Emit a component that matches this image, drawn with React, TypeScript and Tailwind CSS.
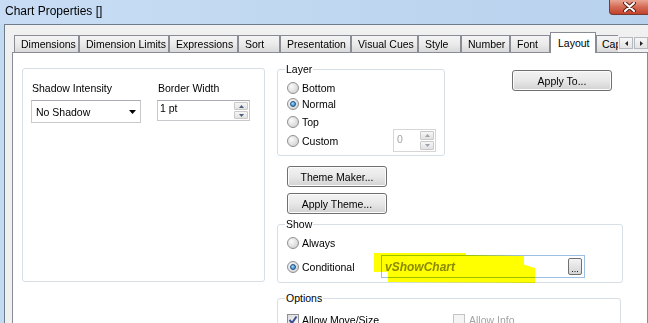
import React from 'react';

const tabs = [
  { label: 'Dimensions', w: 'w-[65px]' },
  { label: 'Dimension Limits', w: 'w-[90px]' },
  { label: 'Expressions', w: 'w-[69px]' },
  { label: 'Sort', w: 'w-[42px]' },
  { label: 'Presentation', w: 'w-[71px]' },
  { label: 'Visual Cues', w: 'w-[67px]' },
  { label: 'Style', w: 'w-[43px]' },
  { label: 'Number', w: 'w-[49px]' },
  { label: 'Font', w: 'w-[40px]' },
];

function Radio({ checked }: { checked?: boolean }) {
  return (
    <span className="w-[12px] h-[12px] rounded-full border border-[#8e8f8f] bg-radial-[at_35%_35%] from-[#fbfbfb] to-[#c9c9c9] flex items-center justify-center shrink-0">
      {checked && (
        <span className="w-[6px] h-[6px] rounded-full border border-[#1f4f86] bg-radial-[at_40%_35%] from-[#9fe0ff] to-[#1d6cb5]" />
      )}
    </span>
  );
}

function Check({ checked, disabled }: { checked?: boolean; disabled?: boolean }) {
  return (
    <span
      className={`w-[12px] h-[12px] border flex items-center justify-center shrink-0 ${
        disabled ? 'border-[#c4c4c4] bg-[#f4f4f4]' : 'border-[#8e8f8f] bg-linear-to-br from-[#dcdcdc] to-[#fbfbfb]'
      }`}
    >
      {checked && (
        <svg width="10" height="10" viewBox="0 0 10 10">
          <path d="M1.5 5 L4 8 L8.5 1.5" fill="none" stroke="#3b4f8f" strokeWidth="2" />
        </svg>
      )}
    </span>
  );
}

function WinButton({ children, className = '' }: { children: React.ReactNode; className?: string }) {
  return (
    <div
      className={`h-[21px] w-[100px] rounded-[3px] border border-[#707070] bg-linear-to-b from-[#f3f3f3] via-[#e8e8e8] to-[#d2d2d2] shadow-[inset_0_0_0_1px_#fbfbfb] flex items-center justify-center text-black ${className}`}
    >
      {children}
    </div>
  );
}

function SpinButtons({ faded }: { faded?: boolean }) {
  const arrow = faded ? '#9aa3ad' : '#4c607a';
  return (
    <div className="flex flex-col gap-[1px] w-[15px] h-full py-[1px] pr-[1px]">
      <div className="flex-1 border border-[#c9c9c9] rounded-[1px] bg-linear-to-b from-[#f6f6f6] to-[#e2e2e2] flex items-center justify-center">
        <svg width="5" height="3" viewBox="0 0 5 3">
          <path d="M0 3 L2.5 0 L5 3 Z" fill={arrow} />
        </svg>
      </div>
      <div className="flex-1 border border-[#c9c9c9] rounded-[1px] bg-linear-to-b from-[#f6f6f6] to-[#e2e2e2] flex items-center justify-center">
        <svg width="5" height="3" viewBox="0 0 5 3">
          <path d="M0 0 L2.5 3 L5 0 Z" fill={arrow} />
        </svg>
      </div>
    </div>
  );
}

function Group({ title, className = '', children }: { title: string; className?: string; children?: React.ReactNode }) {
  return (
    <div className={`relative border border-[#d5dfe5] rounded-[3px] ${className}`}>
      {title && <span className="absolute -top-[7px] left-[7px] bg-white px-[1px] leading-[12px]">{title}</span>}
      {children}
    </div>
  );
}

export default function App() {
  return (
    <div className="w-[648px] h-[323px] overflow-hidden flex flex-col bg-[#c3daf3] font-['Liberation_Sans',Arial,sans-serif] text-[10.5px] leading-[12px] text-black select-none">
      {/* title bar */}
      <div className="h-[24px] flex items-start justify-between bg-linear-to-r from-[#c8ddf5] to-[#b8d1ec] shrink-0">
        <span className="mt-[4px] ml-[5px] text-[12px] leading-[14px] text-black">Chart Properties []</span>
        <div className="w-[39px] h-[15px] rounded-bl-[4px] border-l border-b border-[#7a3a30] bg-linear-to-b from-[#e9a593] via-[#d46a55] to-[#c2412b] flex items-center justify-center">
          <svg width="13" height="10" viewBox="0 0 13 10">
            <path d="M2 1 L11 9 M11 1 L2 9" stroke="#5b1f14" strokeWidth="4" strokeLinecap="round" />
            <path d="M2 1 L11 9 M11 1 L2 9" stroke="#ffffff" strokeWidth="2" strokeLinecap="round" />
          </svg>
        </div>
      </div>

      {/* client area */}
      <div className="flex-1 flex pl-[4px]">
        <div className="flex-1 flex flex-col border-l border-t border-[#6f7c8a] bg-[#f0f0f0] pt-[7px] pl-[7px] pr-[1px]">
          {/* tab strip */}
          <div className="flex items-end h-[21px] -mb-px relative z-10 pl-[2px]">
            {tabs.map(t => (
              <div
                key={t.label}
                className={`${t.w} h-[17px] mb-[1px] border-l border-t border-r border-[#898c95] bg-linear-to-b from-[#f4f4f4] via-[#ebebeb] to-[#d9d9d9] flex items-center pl-[6px] whitespace-nowrap overflow-hidden`}
              >
                {t.label}
              </div>
            ))}
            <div className="w-[46px] h-[21px] border-l border-t border-r border-[#898c95] bg-white flex items-center pl-[7px] pb-[1px]">
              Layout
            </div>
            <div className="w-[22px] h-[17px] mb-[1px] border-l border-t border-[#898c95] bg-linear-to-b from-[#f4f4f4] via-[#ebebeb] to-[#d9d9d9] flex items-center pl-[5px] whitespace-nowrap overflow-hidden">
              Cap
            </div>
            <div className="flex gap-[1px] mb-[4px] h-[12px] ml-[1px]">
              <div className="w-[14px] border border-[#b5b9c0] bg-linear-to-b from-[#f7f7f7] to-[#e3e3e3] flex items-center justify-center">
                <svg width="3" height="5" viewBox="0 0 3 5">
                  <path d="M3 0 L0 2.5 L3 5 Z" fill="#222" />
                </svg>
              </div>
              <div className="w-[14px] border border-[#b5b9c0] bg-linear-to-b from-[#f7f7f7] to-[#e3e3e3] flex items-center justify-center">
                <svg width="3" height="5" viewBox="0 0 3 5">
                  <path d="M0 0 L3 2.5 L0 5 Z" fill="#222" />
                </svg>
              </div>
            </div>
          </div>

          {/* tab panel */}
          <div className="flex-1 border border-[#898c95] bg-white flex items-start pl-[9px] pt-[15px]">
            {/* shadow / border group */}
            <Group title="" className="w-[243px] h-[214px] shrink-0">
              <div className="flex gap-[16px] pl-[8px] pt-[13px]">
                <div className="flex flex-col">
                  <span className="pl-[1px]">Shadow Intensity</span>
                  <div className="mt-[6px] w-[110px] h-[23px] border border-[#c8c9cc] border-t-[#abadb3] flex items-center justify-between pl-[4px] pr-[4px]">
                    <span>No Shadow</span>
                    <svg width="7" height="4" viewBox="0 0 7 4">
                      <path d="M0 0 L7 0 L3.5 4 Z" fill="#000" />
                    </svg>
                  </div>
                </div>
                <div className="flex flex-col">
                  <span className="pl-[1px]">Border Width</span>
                  <div className="mt-[6px] w-[93px] h-[21px] border border-[#c8c9cc] border-t-[#abadb3] flex justify-between">
                    <span className="pl-[2px] pt-[1px]">1 pt</span>
                    <SpinButtons />
                  </div>
                </div>
              </div>
            </Group>

            {/* right column */}
            <div className="ml-[12px] mt-[1px] flex flex-col shrink-0">
              <div className="flex items-start">
                <Group title="Layer" className="w-[168px] h-[87px] pl-[9px] pt-[12px]">
                  <div className="flex items-center gap-[3px] h-[12px]">
                    <Radio />
                    <span>Bottom</span>
                  </div>
                  <div className="flex items-center gap-[3px] h-[12px] mt-[4px]">
                    <Radio checked />
                    <span>Normal</span>
                  </div>
                  <div className="flex items-center gap-[3px] h-[12px] mt-[6px]">
                    <Radio />
                    <span>Top</span>
                  </div>
                  <div className="flex items-center gap-[3px] w-[149px] mt-[1px]">
                    <Radio />
                    <span>Custom</span>
                    <div className="ml-auto w-[43px] h-[23px] border border-[#d6d6d6] flex justify-between">
                      <span className="pl-[3px] pt-[3px] text-[#a3a3a3]">0</span>
                      <SpinButtons faded />
                    </div>
                  </div>
                </Group>
                <WinButton className="ml-[67px] mt-[1px]">Apply To...</WinButton>
              </div>

              <WinButton className="ml-[10px] mt-[10px]">Theme Maker...</WinButton>
              <WinButton className="ml-[10px] mt-[6px]">Apply Theme...</WinButton>

              <Group title="Show" className="w-[346px] h-[59px] mt-[10px] pl-[9px] pt-[12px]">
                <div className="flex items-center gap-[3px] h-[12px]">
                  <Radio />
                  <span>Always</span>
                </div>
                <div className="flex items-center gap-[3px] mt-[6px]">
                  <Radio checked />
                  <span className="w-[76px]">Conditional</span>
                  <div className="w-[204px] h-[23px] border border-[#9cbfe3] flex items-center justify-between pl-[3px] pr-[2px]">
                    <span className="italic font-bold text-[12px] text-[#8a8a8a]">vShowChart</span>
                    <div className="w-[14px] h-[17px] rounded-[2px] border border-[#707070] bg-linear-to-b from-[#f4f4f4] to-[#d4d4d4] flex items-end justify-center text-[9px] leading-[10px]">
                      ...
                    </div>
                  </div>
                </div>
                <svg
                  className="absolute left-[96px] top-[28px] pointer-events-none mix-blend-multiply"
                  width="165"
                  height="32"
                  viewBox="0 0 165 32"
                >
                  <path d="M0 0 L92 0 L92 2 L150 3 L150 17 L0 19 Z" fill="#ffff00" />
                  <path d="M14 10 L148 11 L161 15 L161 30 L14 29 Z" fill="#ffff00" />
                </svg>
              </Group>

              <Group title="Options" className="w-[344px] h-[60px] mt-[15px] pl-[9px] pt-[15px]">
                <div className="flex items-center h-[12px]">
                  <div className="flex items-center gap-[3px] w-[166px]">
                    <Check checked />
                    <span>Allow Move/Size</span>
                  </div>
                  <div className="flex items-center gap-[4px]">
                    <Check disabled />
                    <span className="text-[#a3a3a3]">Allow Info</span>
                  </div>
                </div>
              </Group>
            </div>
          </div>
        </div>
      </div>
    </div>
  );
}
